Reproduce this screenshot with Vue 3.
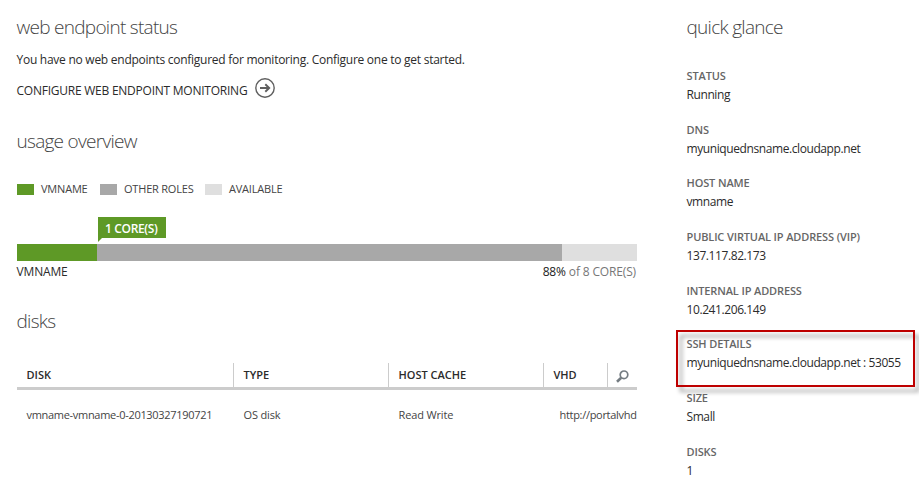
<script setup>
const legend = [
  { label: 'VMNAME', kind: 'own' },
  { label: 'OTHER ROLES', kind: 'other' },
  { label: 'AVAILABLE', kind: 'free' },
]
const segments = [
  { kind: 'own', share: 80 },
  { kind: 'other', share: 465 },
  { kind: 'free', share: 75 },
]
const glance = [
  { label: 'STATUS', value: 'Running' },
  { label: 'DNS', value: 'myuniquednsname.cloudapp.net' },
  { label: 'HOST NAME', value: 'vmname' },
  { label: 'PUBLIC VIRTUAL IP ADDRESS (VIP)', value: '137.117.82.173' },
  { label: 'INTERNAL IP ADDRESS', value: '10.241.206.149' },
  { label: 'SSH DETAILS', value: 'myuniquednsname.cloudapp.net : 53055', marked: true },
  { label: 'SIZE', value: 'Small' },
  { label: 'DISKS', value: '1' },
]
</script>

<template>
  <div class="page">
    <main class="main">
      <section class="endpoint">
        <h2>web endpoint status</h2>
        <p class="message">You have no web endpoints configured for monitoring. Configure one to get started.</p>
        <a class="configure">
          <span>CONFIGURE WEB ENDPOINT MONITORING</span>
          <svg width="20" height="20" viewBox="0 0 20 20" fill="none" stroke="#5f5f5f">
            <circle cx="10" cy="10" r="9.2" stroke-width="1.4" />
            <path d="M5 10H14M10.3 6.2L14.2 10L10.3 13.8" stroke-width="1.9" />
          </svg>
        </a>
      </section>

      <section class="usage">
        <h2>usage overview</h2>
        <ul class="legend">
          <li v-for="item in legend" :key="item.kind">
            <i :class="item.kind"></i><span>{{ item.label }}</span>
          </li>
        </ul>
        <div class="chart">
          <div class="tag">1 CORE(S)</div>
          <div class="bar">
            <div v-for="s in segments" :key="s.kind" :class="s.kind" :style="{ flexGrow: s.share }"></div>
          </div>
          <div class="caption">
            <span class="name">VMNAME</span>
            <span class="total"><b>88%</b> of 8 CORE(S)</span>
          </div>
        </div>
      </section>

      <section class="disks">
        <h2>disks</h2>
        <div class="grid head">
          <div>DISK</div>
          <div>TYPE</div>
          <div>HOST CACHE</div>
          <div>VHD</div>
          <div class="search">
            <svg width="13" height="13" viewBox="0 0 13 13" fill="none" stroke="#747c82">
              <circle cx="8" cy="4.8" r="3.8" stroke-width="1.7" />
              <path d="M5.2 7.8L1 11.8" stroke-width="2.6" />
            </svg>
          </div>
        </div>
        <div class="grid row">
          <div class="disk-name">vmname-vmname-0-20130327190721</div>
          <div>OS disk</div>
          <div>Read Write</div>
          <div class="url">http://portalvhd</div>
        </div>
      </section>
    </main>

    <aside class="glance">
      <h2>quick glance</h2>
      <dl>
        <div v-for="g in glance" :key="g.label" class="entry" :class="{ marked: g.marked }">
          <dt>{{ g.label }}</dt>
          <dd>{{ g.value }}</dd>
        </div>
      </dl>
    </aside>
  </div>
</template>

<style>
body { background: #fff; overflow: hidden; }
</style>

<style scoped>
.page {
  box-sizing: border-box;
  width: 919px;
  height: 483px;
  overflow: hidden;
  display: flex;
  padding: 13px 0 0 17px;
  font: 12px/20px "Open Sans", "Noto Sans", sans-serif;
  color: #2b2b2b;
  white-space: nowrap;
}
h2, p, ul, dl, dd { margin: 0; padding: 0; }
h2 {
  font-size: 19px;
  line-height: 29px;
  height: 28px;
  font-weight: 300;
  letter-spacing: -0.72px;
  text-indent: -0.5px;
  color: #444;
}
.main { width: 620px; }
.endpoint { height: 114px; }
.message { margin-top: 9px; letter-spacing: -0.26px; text-indent: -0.5px; }
.configure { display: flex; gap: 7px; margin-top: 8px; letter-spacing: -0.24px; text-indent: -0.5px; }
.configure span { padding-top: 3px; height: 17px; width: 231px; }
.usage { height: 180px; }
.legend {
  display: flex;
  list-style: none;
  margin-top: 24px;
  font-size: 11px;
  color: #444;
  letter-spacing: -0.2px;
}
.legend li { display: flex; align-items: center; }
.legend li:nth-child(1) { width: 83px; }
.legend li:nth-child(2) { width: 105px; }
.legend i { width: 17px; height: 11px; margin-right: 7px; }
.own { background: #5e9926; }
.other { background: #a8a8a8; }
.free { background: #dfdfdf; }
.chart { margin-top: 18px; }
.tag {
  width: 68px;
  height: 25px;
  margin: 0 0 2px 81px;
  background: #5e9926;
  clip-path: polygon(0 0, 100% 0, 100% 21px, 4px 21px, 0 25px);
  color: #fff;
  font-weight: 600;
  line-height: 24px;
  letter-spacing: -0.35px;
  padding-left: 7px;
  box-sizing: border-box;
}
.bar { display: flex; height: 17px; }
.caption { display: flex; justify-content: space-between; padding: 1px 1px 0 0; letter-spacing: -0.15px; text-indent: -0.5px; }
.total { color: #777; }
.total b { font-weight: 400; color: #222; }
.grid { display: grid; grid-template-columns: 216px 155px 155px 64px 30px; }
.head {
  margin-top: 28px;
  height: 24px;
  border-bottom: 3px solid #ccc;
  font-size: 11px;
  line-height: 24px;
  font-weight: 600;
}
.head div { padding-left: 9.5px; border-left: 1px solid #ccc; }
.head div:first-child { border-left: 0; }
.head .search { padding-left: 8px; }
.search svg { display: block; margin-top: 6.5px; }
.row { margin-top: 15px; font-size: 11px; color: #444; letter-spacing: -0.15px; }
.row div { padding-left: 10.5px; }
.row .disk-name { padding-left: 9.5px; letter-spacing: -0.3px; }
.row .url { grid-column: 4 / 6; padding-left: 0; margin-left: 16.5px; letter-spacing: -0.3px; }
.glance { margin-left: 50px; width: 230px; }
.glance dl { margin-top: 25px; text-indent: -0.5px; }
.entry { position: relative; height: 53.7px; }
dt { font-size: 11px; line-height: 19px; font-weight: 600; color: #666; letter-spacing: -0.13px; }
dd { line-height: 19px; letter-spacing: -0.41px; }
.marked::after {
  content: "";
  position: absolute;
  box-sizing: border-box;
  left: -11px;
  top: -4.5px;
  width: 239px;
  height: 57px;
  border: 2px solid #be0000;
  filter: drop-shadow(4px 5px 2px rgba(0, 0, 0, 0.4));
}
</style>
